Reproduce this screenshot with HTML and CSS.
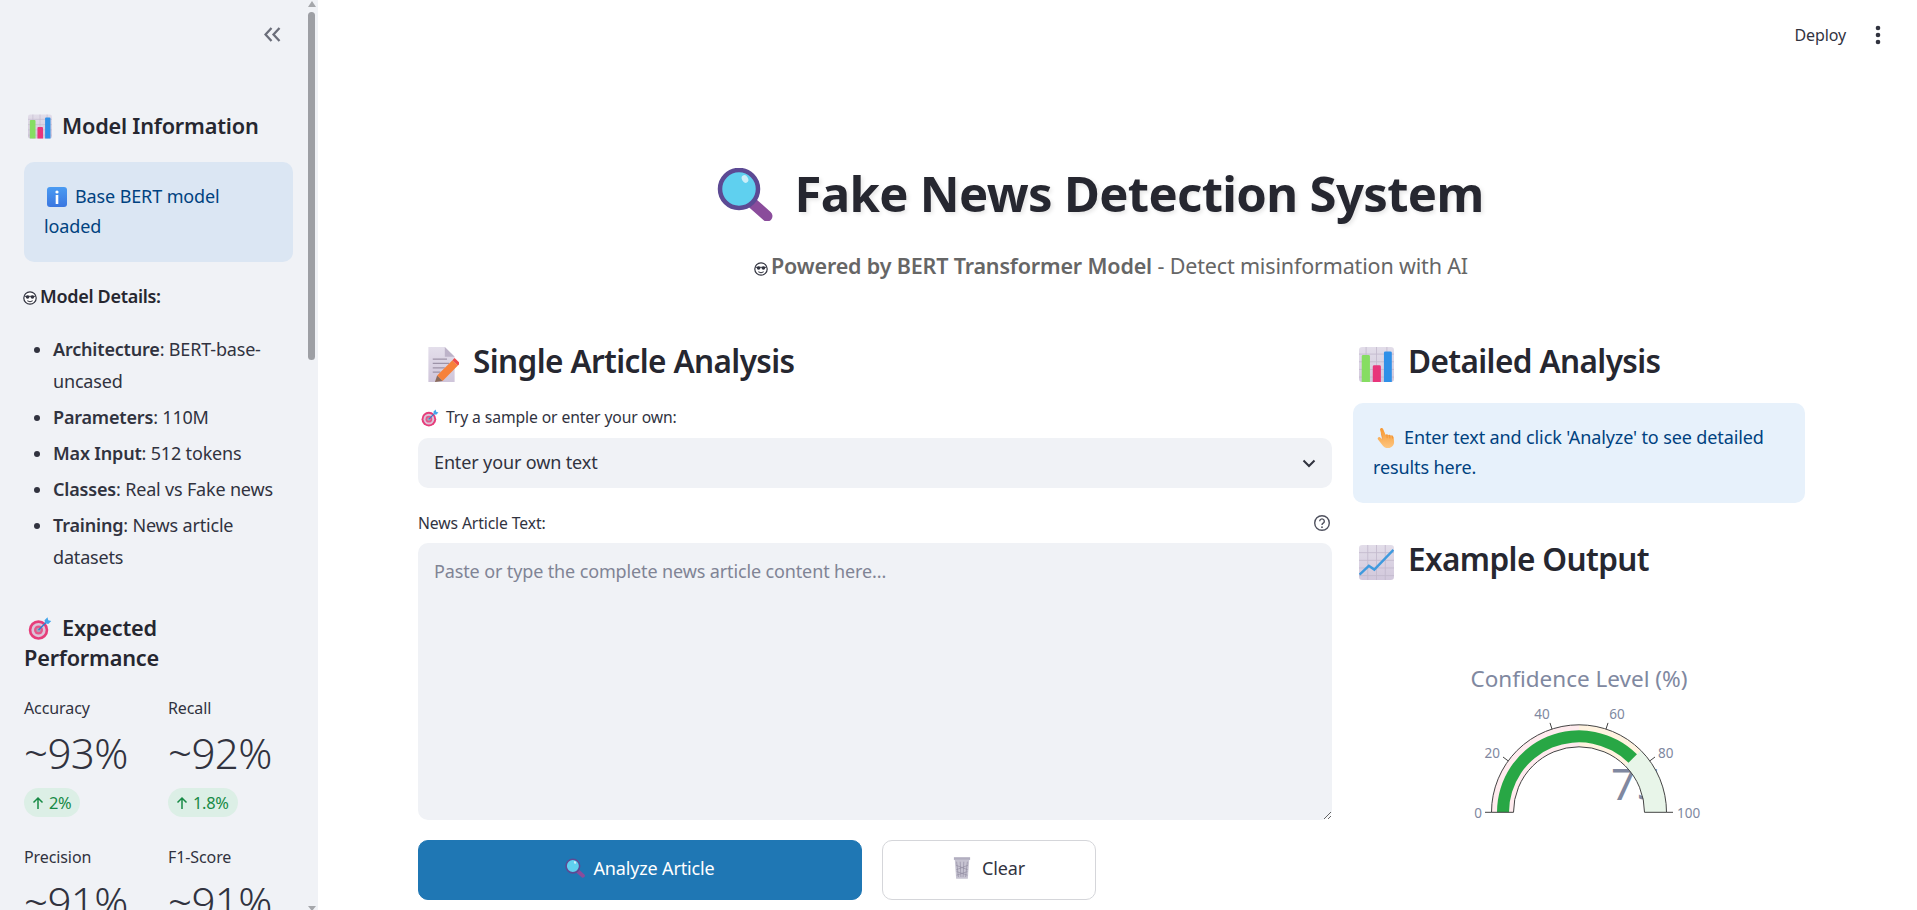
FILE: index.html
```html
<!DOCTYPE html>
<html lang="en">
<head>
<meta charset="utf-8">
<title>Fake News Detection System</title>
<link rel="stylesheet" href="styles.css">
</head>
<body>
<svg class="defs" width="0" height="0" aria-hidden="true">
  <defs>
    <linearGradient id="tile" x1="0" y1="0" x2="0" y2="1"><stop offset="0" stop-color="#e2dde9"/><stop offset="1" stop-color="#d2c8dc"/></linearGradient>
    <linearGradient id="page" x1="0" y1="0" x2="0" y2="1"><stop offset="0" stop-color="#e4dfeb"/><stop offset="1" stop-color="#cfc5da"/></linearGradient>
    <linearGradient id="ibox" x1="0" y1="0" x2="0" y2="1"><stop offset="0" stop-color="#4a9bf2"/><stop offset="1" stop-color="#3a76e0"/></linearGradient>
    <linearGradient id="skin" x1="0" y1="0" x2="0" y2="1"><stop offset="0" stop-color="#f7972f"/><stop offset="1" stop-color="#fdc680"/></linearGradient>
    <symbol id="e-bars" viewBox="0 0 32 32">
      <rect width="32" height="32" rx="3" fill="url(#tile)"/>
      <path d="M0 6.5H32M0 13.5H32M0 20.5H32M0 27.5H32M6.5 0V32M16 0V32M25.500 0V32" stroke="#c3bace" stroke-width=".8"/>
      <path d="M2.500 32V8.500a1.300 1.300 0 0 1 1.300-1.300h4.900a1.300 1.300 0 0 1 1.300 1.300V32z" fill="#86dd62"/>
      <path d="M12.600 32V18a1.300 1.300 0 0 1 1.300-1.300h4.800A1.300 1.300 0 0 1 20 18v14z" fill="#e8357b"/>
      <path d="M22.800 32V5.300A1.300 1.300 0 0 1 24.100 4H28.700A1.300 1.300 0 0 1 30 5.300V32z" fill="#2f90e8"/>
    </symbol>
    <symbol id="e-line" viewBox="0 0 32 32">
      <rect width="32" height="32" rx="3" fill="url(#tile)"/>
      <path d="M0 7H32M0 14H32M0 21H32M0 28H32M8 0V32M16 0V32M24 0V32" stroke="#c3bace" stroke-width=".8"/>
      <path d="M.500 27L9 19l5 3.500L31.500 4.500" fill="none" stroke="#3f9ade" stroke-width="2.200"/>
    </symbol>
    <symbol id="e-memo" viewBox="0 0 32 32">
      <path d="M4 0H19L28 9V32H4z" fill="url(#page)"/>
      <path d="M19 0L28 9H19z" fill="#bdb3c9"/>
      <path d="M8 11H21M8 15H23M8 19H19M8 23H15" stroke="#9d93a8" stroke-width="1.100"/>
      <path d="M12 26L26 12l5 5-14 14z" fill="#f7813b"/>
      <path d="M26 12l2-2 5 5-2 2z" fill="#ee4b4b"/>
      <path d="M12 26L17 31 10 32z" fill="#8a6a5a"/>
    </symbol>
    <symbol id="e-target" viewBox="0 0 32 32">
      <circle cx="14" cy="18" r="13" fill="#e63d7a"/>
      <circle cx="14" cy="18" r="9.500" fill="#dcc4d8"/>
      <circle cx="14" cy="18" r="6" fill="#e6558a"/>
      <circle cx="14" cy="18" r="3" fill="#a9a3b8"/>
      <path d="M14 18L26 6" stroke="#2f7fd0" stroke-width="1.800"/>
      <path d="M22 5l4-4 1 4 4 1-4 4-4-1z" fill="#45a6ea"/>
    </symbol>
    <symbol id="e-glass" viewBox="0 0 56 53">
      <path d="M33 33L50 48" stroke="#8a4c9b" stroke-width="11" stroke-linecap="round"/>
      <circle cx="22" cy="21" r="19" fill="#5fd0ef" stroke="#5c4a94" stroke-width="4.500"/>
      <ellipse cx="28" cy="11" rx="3" ry="4" fill="#cbeef8" transform="rotate(-30 28 11)"/>
    </symbol>
    <symbol id="e-info" viewBox="0 0 20 20">
      <rect width="20" height="20" rx="3" fill="url(#ibox)"/>
      <circle cx="10" cy="5" r="1.600" fill="#fff"/>
      <rect x="8.700" y="8" width="2.600" height="9" fill="#fff"/>
    </symbol>
    <symbol id="e-hand" viewBox="0 0 20 22">
      <path d="M3.400 1.600a1.800 1.800 0 0 1 3.300-.7l2.800 6.600 1.500-.5 1.400.6 1.400-.3 1.500.9 1.500-.1 1.700 2.100.3 4.400a6.500 6.500 0 0 1-5 7.300 7 7 0 0 1-7-2L1 12.300a1.600 1.600 0 0 1 2.300-2l3 2.400z" fill="url(#skin)"/>
      <path d="M11 7.200l.3 4M14 7.600l.2 3.800M17 8.600l.2 3M6.200 12.500L4.800 6" stroke="#e8832a" stroke-width=".6" fill="none"/>
    </symbol>
    <symbol id="e-trash" viewBox="0 0 20 24">
      <path d="M1 0H19V3H1z" fill="#b2aec0"/>
      <path d="M2 3H18L16.500 24H3.500z" fill="#c6c3d1"/>
      <path d="M4 5l2 17M8 5l.8 17M12 5l-.8 17M16 5l-2 17M3.500 9l13 5M16.500 9l-13 5M4 16l12 4M16 16L4 20" stroke="#8f8ba0" stroke-width=".7"/>
    </symbol>
    <symbol id="e-nerd" viewBox="0 0 14 14">
      <circle cx="7" cy="7" r="6.200" fill="#fff" stroke="#31333f" stroke-width="1.200"/>
      <path d="M1.500 5.300H12.500" stroke="#31333f" stroke-width="1"/>
      <circle cx="4.600" cy="6" r="1.800" fill="#31333f"/>
      <circle cx="9.400" cy="6" r="1.800" fill="#31333f"/>
      <path d="M4.300 9.800Q7 11.800 9.700 9.800" stroke="#31333f" stroke-width="1" fill="none"/>
    </symbol>
  </defs>
</svg>

<div class="app">
  <aside class="sidebar">
    <div class="side-top">
      <svg class="collapse" viewBox="0 0 17 15"><path d="M7.500 1L1.500 7.500 7.500 14M15.500 1L9.500 7.500 15.500 14" fill="none" stroke="#6b6e7a" stroke-width="2.300"/></svg>
    </div>
    <h3 class="side-h"><svg class="emoji-s"><use href="#e-bars"/></svg>Model Information</h3>
    <div class="info side-info"><svg class="emoji-i"><use href="#e-info"/></svg>Base BERT model loaded</div>
    <p class="details-title"><svg class="nerd"><use href="#e-nerd"/></svg>Model Details:</p>
    <ul class="details">
      <li><b>Architecture</b>: BERT-base-uncased</li>
      <li><b>Parameters</b>: 110M</li>
      <li><b>Max Input</b>: 512 tokens</li>
      <li><b>Classes</b>: Real vs Fake news</li>
      <li><b>Training</b>: News article datasets</li>
    </ul>
    <h3 class="side-h perf"><svg class="emoji-s"><use href="#e-target"/></svg>Expected Performance</h3>
    <div class="metrics">
      <div class="metric">
        <div class="m-label">Accuracy</div>
        <div class="m-value">~93%</div>
        <span class="m-delta"><svg class="arrow" viewBox="0 0 12 14"><path d="M6 13V2M1.500 6.500L6 2l4.500 4.500" fill="none" stroke="#178a45" stroke-width="1.500"/></svg>2%</span>
      </div>
      <div class="metric">
        <div class="m-label">Recall</div>
        <div class="m-value">~92%</div>
        <span class="m-delta"><svg class="arrow" viewBox="0 0 12 14"><path d="M6 13V2M1.500 6.500L6 2l4.500 4.500" fill="none" stroke="#178a45" stroke-width="1.500"/></svg>1.8%</span>
      </div>
      <div class="metric">
        <div class="m-label">Precision</div>
        <div class="m-value">~91%</div>
      </div>
      <div class="metric">
        <div class="m-label">F1-Score</div>
        <div class="m-value">~91%</div>
      </div>
    </div>
    <div class="scroll-thumb"></div>
    <div class="scroll-up"></div>
    <div class="scroll-down"></div>
  </aside>

  <main class="main">
    <header class="topbar">
      <span class="deploy">Deploy</span>
      <svg class="kebab" viewBox="0 0 6 20"><circle cx="3" cy="3" r="2.300"/><circle cx="3" cy="10" r="2.300"/><circle cx="3" cy="17" r="2.300"/></svg>
    </header>

    <h1 class="title"><svg class="emoji-t"><use href="#e-glass"/></svg>Fake News Detection System</h1>
    <p class="subtitle"><svg class="nerd"><use href="#e-nerd"/></svg><b>Powered by BERT Transformer Model</b> - Detect misinformation with AI</p>

    <div class="columns">
      <section class="col-left">
        <h2 class="sec"><svg class="emoji-h"><use href="#e-memo"/></svg>Single Article Analysis</h2>
        <label class="field-label first"><svg class="emoji-l"><use href="#e-target"/></svg>Try a sample or enter your own:</label>
        <div class="select">
          <span>Enter your own text</span>
          <svg class="chev" viewBox="0 0 14 9"><path d="M1.500 1.500L7 7l5.500-5.500" fill="none" stroke="#31333f" stroke-width="2"/></svg>
        </div>
        <div class="field-label second">
          <span>News Article Text:</span>
          <svg class="help" viewBox="0 0 18 18"><circle cx="9" cy="9" r="7.300" fill="none" stroke="#4f515e" stroke-width="1.400"/><path d="M6.700 7.200a2.300 2.300 0 1 1 3.500 2c-.8.500-1.200 1-1.200 1.800" fill="none" stroke="#4f515e" stroke-width="1.400"/><circle cx="9" cy="13.200" r=".9" fill="#4f515e"/></svg>
        </div>
        <textarea class="area" placeholder="Paste or type the complete news article content here..."></textarea>
        <div class="actions">
          <button class="btn primary"><svg class="emoji-b"><use href="#e-glass"/></svg>Analyze Article</button>
          <button class="btn ghost"><svg class="emoji-b trash"><use href="#e-trash"/></svg>Clear</button>
        </div>
      </section>

      <section class="col-right">
        <h2 class="sec"><svg class="emoji-h"><use href="#e-bars"/></svg>Detailed Analysis</h2>
        <div class="info main-info"><svg class="emoji-i"><use href="#e-hand"/></svg>Enter text and click 'Analyze' to see detailed results here.</div>
        <h2 class="sec example"><svg class="emoji-h"><use href="#e-line"/></svg>Example Output</h2>
        <svg class="gauge" viewBox="0 0 452 190" width="452" height="190">
          <text class="g-title" x="226" y="37" text-anchor="middle">Confidence Level (%)</text>
          <text class="g-num" x="258" y="150">75</text>
          <path d="M138.500 162.300A87.500 87.500 0 0 1 226 74.800L226 96.800A65.500 65.500 0 0 0 160.500 162.300Z" fill="#ffebee"/>
          <path d="M226 74.800A87.500 87.500 0 0 1 287.870 100.430L272.320 115.980A65.500 65.500 0 0 0 226 96.800Z" fill="#fff3e0"/>
          <path d="M287.870 100.430A87.500 87.500 0 0 1 313.500 162.300L291.500 162.300A65.500 65.500 0 0 0 272.320 115.980Z" fill="#e8f5e9"/>
          <path d="M144 162.300A82 82 0 0 1 283.980 104.320L275.500 112.800A70 70 0 0 0 156 162.300Z" fill="#28a745"/>
          <path d="M138.500 162.300A87.500 87.500 0 0 1 313.500 162.300M160.500 162.300A65.500 65.500 0 0 1 291.500 162.300M138.500 162.300H160.500M291.500 162.300H313.500" fill="none" stroke="#444" stroke-width="1"/>
          <path d="M138.500 162.300H132M155.200 110.900L150 107M199 79.100L197 72.900M253 79.100L255 72.900M296.800 110.900L302 107M313.500 162.300H320" stroke="#444" stroke-width="1"/>
          <text class="g-tick" x="129" y="168" text-anchor="end">0</text>
          <text class="g-tick" x="147" y="108" text-anchor="end">20</text>
          <text class="g-tick" x="189" y="69" text-anchor="middle">40</text>
          <text class="g-tick" x="264" y="69" text-anchor="middle">60</text>
          <text class="g-tick" x="305" y="108">80</text>
          <text class="g-tick" x="324" y="168">100</text>
        </svg>
      </section>
    </div>
  </main>
</div>
</body>
</html>
```

FILE: styles.css
```css
* { box-sizing: border-box; }
html, body { margin: 0; height: 100%; overflow: hidden; }
body { font-family: "Noto Sans", "Liberation Sans", sans-serif; color: #31333f; background: #fff; }
.defs { position: absolute; }
.app { display: flex; height: 910px; }
svg { flex: none; }

/* Sidebar */
.sidebar { position: relative; width: 318px; height: 910px; overflow: hidden; background: #f0f2f6; padding: 0 25px 0 24px; flex: none; }
.side-top { height: 111px; padding-top: 27px; display: flex; justify-content: flex-end; align-items: flex-start; padding-right: 12px; }
.collapse { width: 17px; height: 15px; }
.side-h { margin: 0; font-size: 21.7px; line-height: 30px; font-weight: 600; color: #262730; letter-spacing: -.2px; }
.emoji-s { width: 24px; height: 25px; margin: 0 10px 0 4px; vertical-align: -5px; }
.info { color: #004280; border-radius: 10px; font-size: 18px; line-height: 30px; padding: 19px 20px 0; letter-spacing: -.12px; }
.side-info { background: #dbe6f3; margin-top: 21px; height: 100px; }
.emoji-i { width: 20px; height: 20px; margin: 0 8px 0 3px; vertical-align: -4px; }
.details-title { margin: 18px 0 21px; font-size: 18px; line-height: 32px; font-weight: 600; color: #262730; letter-spacing: -.3px; }
.nerd { width: 14px; height: 14px; margin: 0 3px 0 -1px; vertical-align: -2px; }
.details { margin: 0; padding: 0 0 0 29px; font-size: 18px; line-height: 32px; letter-spacing: -.18px; }
.details li { margin-bottom: 4px; padding-left: 0; }
.details b { font-weight: 600; }
.perf { margin-top: 40px; }
.metrics { display: grid; grid-template-columns: 144px 125px; row-gap: 30px; margin-top: 25px; }
.m-label { font-size: 16px; line-height: 20px; letter-spacing: -.1px; }
.m-value { font-size: 42px; line-height: 58px; margin: 6px 0 2px; letter-spacing: -.6px; font-weight: 350; }
.m-delta { display: inline-flex; align-items: center; height: 29px; margin-top: 4px; padding: 0 9px 0 8px; border-radius: 15px; background: #dcefe6; color: #178a45; font-size: 16.4px; letter-spacing: -.3px; }
.arrow { width: 12px; height: 14px; margin-right: 5px; }
.scroll-thumb { position: absolute; left: 308px; top: 12px; width: 7px; height: 348px; border-radius: 4px; background: #9d9fa4; }
.scroll-up { position: absolute; left: 308px; top: 1px; border: 4px solid transparent; border-top: 0; border-bottom: 6px solid #a5a7ab; }
.scroll-down { position: absolute; left: 308px; top: 906px; border: 4px solid transparent; border-bottom: 0; border-top: 5px solid #a5a7ab; }

/* Main */
.main { flex: 1; min-width: 0; height: 910px; overflow: hidden; padding: 0 112px 0 100px; }
.topbar { height: 70px; margin-right: -112px; display: flex; justify-content: flex-end; align-items: center; padding-right: 36px; }
.deploy { font-size: 16px; line-height: 20px; letter-spacing: -.1px; margin-right: 29px; }
.kebab { width: 6px; height: 20px; fill: #31333f; }
.title { margin: 88px 0 0; padding-right: 22px; text-align: center; font-size: 49px; line-height: 70px; font-weight: 700; color: #262730; letter-spacing: -.65px; text-shadow: 2px 2px 4px rgba(0,0,0,.1); }
.emoji-t { width: 56px; height: 53px; margin-right: 21px; vertical-align: -9px; }
.subtitle { margin: 22px 0 0; text-align: center; font-size: 21.5px; line-height: 32px; color: #666; letter-spacing: -.16px; }
.subtitle b { font-weight: 600; }
.columns { display: grid; grid-template-columns: 914px 452px; column-gap: 21px; margin-top: 58px; }
.sec { margin: 0; height: 45px; font-size: 31.5px; line-height: 41px; font-weight: 600; color: #262730; letter-spacing: -.6px; }
.emoji-h { width: 35px; height: 35px; margin: 0 14px 0 6px; vertical-align: -9px; }
.field-label { font-size: 15.7px; line-height: 20px; letter-spacing: -.1px; display: block; }
.field-label.first { margin-top: 22px; height: 20px; }
.field-label.second { margin-top: 24px; height: 21px; display: flex; justify-content: space-between; align-items: center; padding-right: 1px; }
.emoji-l { width: 18px; height: 18px; margin: 0 7px 0 3px; vertical-align: -4px; }
.help { width: 18px; height: 18px; }
.select { margin-top: 11px; height: 50px; border-radius: 10px; background: #f0f2f6; display: flex; align-items: center; justify-content: space-between; padding: 0 17px 3px 16px; font-size: 18px; letter-spacing: -.13px; }
.chev { width: 14px; height: 9px; margin: 3px -1px 0 0; }
.area { display: block; width: 100%; height: 277px; margin-top: 10px; border: 0; border-radius: 10px; background: #f0f2f6; padding: 13px 16px; font: 18px/30px "Noto Sans", sans-serif; letter-spacing: -.13px; color: #31333f; outline: 0; }
.area::placeholder { color: #808495; opacity: 1; }
.actions { display: flex; gap: 20px; margin-top: 20px; }
.btn { height: 60px; border-radius: 10px; font: 18px "Noto Sans", sans-serif; letter-spacing: -.15px; padding: 0 0 4px; display: flex; align-items: center; justify-content: center; }
.primary { width: 444px; background: #1f77b4; color: #fff; border: 1px solid #1f77b4; }
.ghost { width: 214px; background: #fff; color: #31333f; border: 1px solid #d5d6da; }
.emoji-b { width: 20px; height: 20px; margin-right: 8px; }
.trash { margin-right: 11px; width: 18px; height: 22px; }
.main-info { background: #e7f1fb; margin-top: 18px; height: 100px; }
.example { margin-top: 35px; }
.gauge { display: block; margin-top: 67px; }
.g-title { font-size: 22.5px; fill: #8088a0; }
.g-num { font-size: 44px; fill: #8088a0; }
.g-tick { font-size: 13.5px; fill: #8088a0; }
```
